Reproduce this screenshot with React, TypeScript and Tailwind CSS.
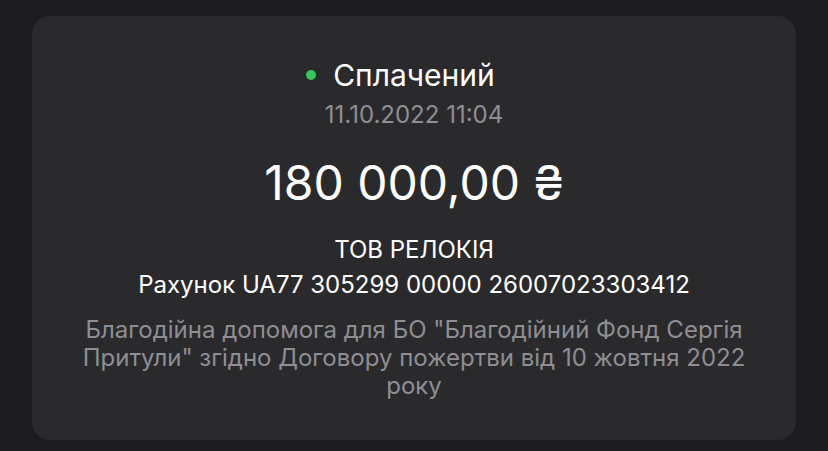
import React from "react";

function App() {
  return (
    <div className="w-[828px] h-[451px] bg-[#1c1c1e] px-8 pt-4 pb-[11px]" style={{ fontFamily: "Inter, 'Noto Sans', sans-serif" }}>
      <div className="h-full bg-[#2a2a2d] rounded-[18px] flex flex-col items-center pt-[41px] text-center">
        <div className="relative h-[36px]">
          <span className="absolute left-[-27px] top-[13px] w-[10px] h-[10px] rounded-full bg-[#34c759]" />
          <span className="text-[30px] text-white leading-[36px]">Сплачений</span>
        </div>
        <div className="text-[24px] text-[#8e8e93] leading-[30px] mt-[7px]">11.10.2022 11:04</div>
        <div className="text-[48px] text-white leading-[56px] mt-[25px]">180 000,00 ₴</div>
        <div className="text-[24px] text-white leading-[30px] mt-[24px]">ТОВ РЕЛОКІЯ</div>
        <div className="text-[24px] text-white leading-[30px] mt-[5px]">Рахунок UA77 305299 00000 26007023303412</div>
        <div className="text-[24px] text-[#8e8e93] leading-[28px] mt-[16px] w-[680px]">
          Благодійна допомога для БО "Благодійний Фонд Сергія Притули" згідно Договору пожертви від 10 жовтня 2022 року
        </div>
      </div>
    </div>
  );
}

export default App;
